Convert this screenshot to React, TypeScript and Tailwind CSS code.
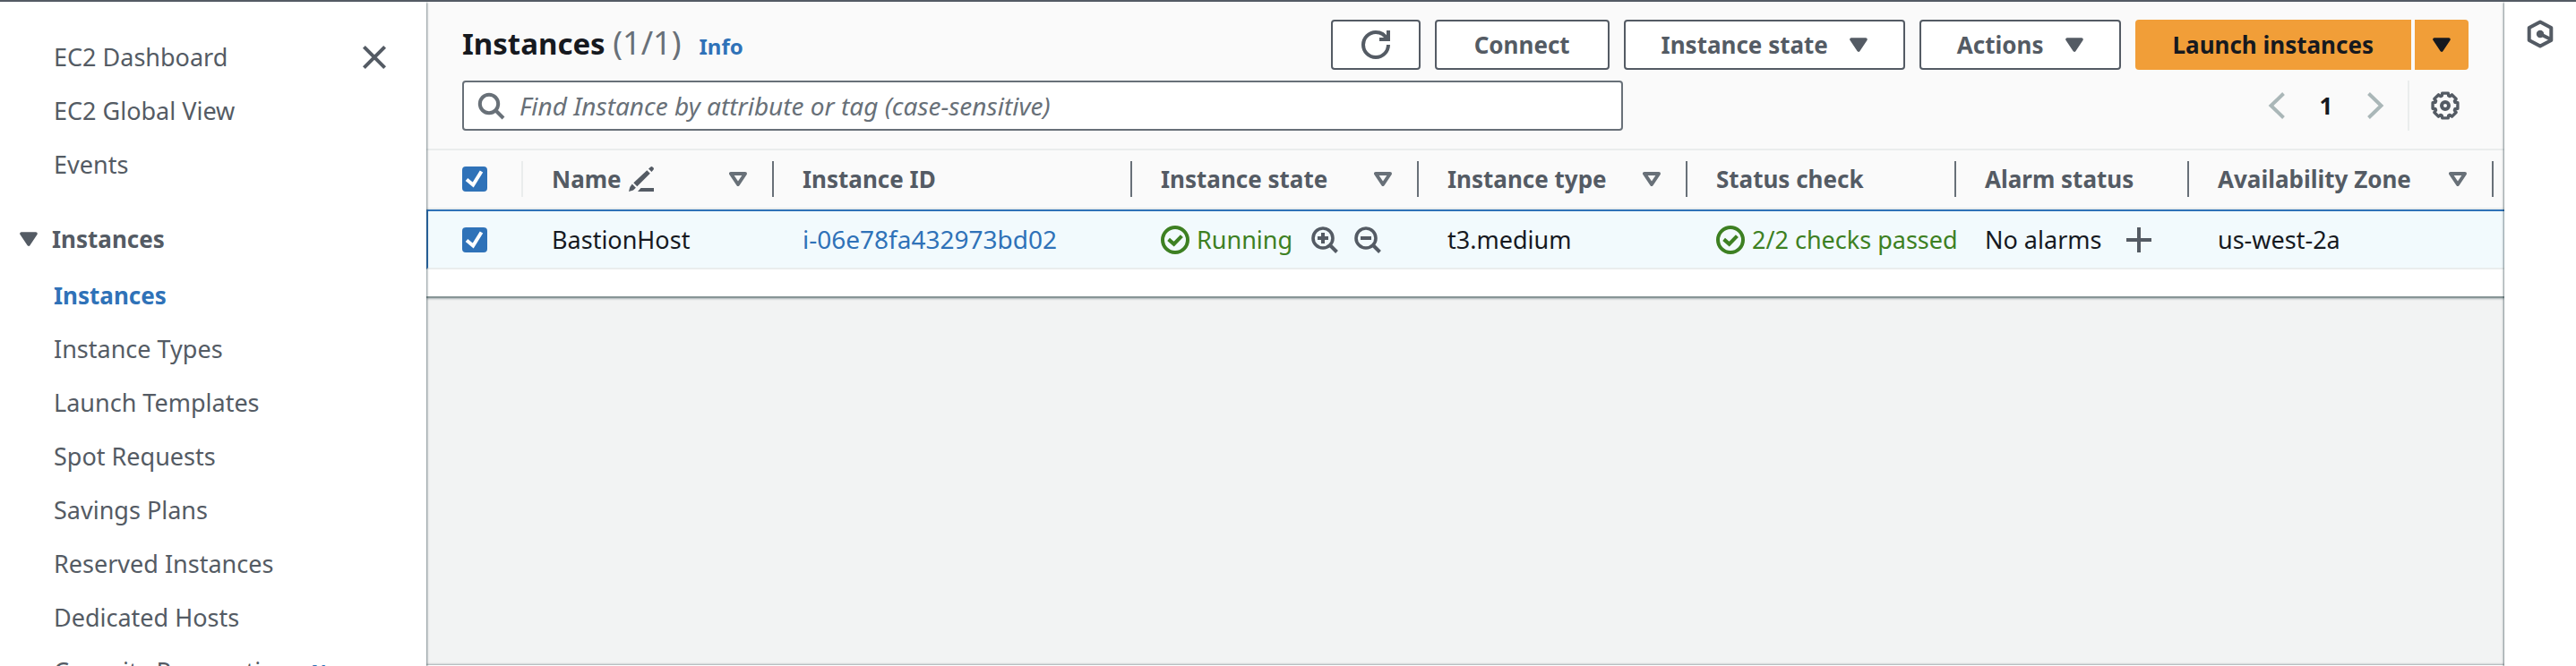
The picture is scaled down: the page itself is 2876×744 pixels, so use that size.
import type { ReactNode } from 'react';

const links = [
  'Instance Types',
  'Launch Templates',
  'Spot Requests',
  'Savings Plans',
  'Reserved Instances',
  'Dedicated Hosts',
];

function CloseIcon() {
  return (
    <svg className="size-8" viewBox="0 0 32 32" fill="none" stroke="currentColor" strokeWidth="4" aria-hidden="true">
      <path d="M4.4 4.4 27.6 27.6M27.6 4.4 4.4 27.6" />
    </svg>
  );
}

function CaretFilled() {
  return (
    <svg className="h-4 w-5 shrink-0" viewBox="0 0 20 16" aria-hidden="true">
      <path d="M2 2h16l-8 12z" fill="currentColor" stroke="currentColor" strokeWidth="3.6" strokeLinejoin="round" />
    </svg>
  );
}

function CaretHollow() {
  return (
    <svg className="h-4 w-5 shrink-0 text-[#687078]" viewBox="0 0 20 16" aria-hidden="true">
      <path d="M2 2h16l-8 12z" fill="none" stroke="currentColor" strokeWidth="4" strokeLinejoin="round" />
    </svg>
  );
}

function SearchIcon() {
  return (
    <svg className="size-8 shrink-0" viewBox="0 0 32 32" fill="none" stroke="currentColor" strokeWidth="4" aria-hidden="true">
      <circle cx="14" cy="14" r="10.2" />
      <path d="m21 21 9 9" />
    </svg>
  );
}

function ZoomIcon({ plus }: { plus?: boolean }) {
  return (
    <svg className="size-8" viewBox="0 0 32 32" fill="none" stroke="currentColor" strokeWidth="4" aria-hidden="true">
      <circle cx="14" cy="14" r="11" strokeWidth="3.6" />
      <path d="m21.5 21.5 8 8M8 14h12" />
      {plus && <path d="M14 8v12" />}
    </svg>
  );
}

function CheckCircle() {
  return (
    <svg className="size-8 shrink-0" viewBox="0 0 32 32" fill="none" stroke="currentColor" strokeWidth="4" aria-hidden="true">
      <circle cx="16" cy="16" r="14" />
      <path d="m8.6 15.4 6 5.2 8.8-9" strokeWidth="4.2" />
    </svg>
  );
}

function RefreshIcon() {
  return (
    <svg className="size-8" viewBox="0 0 16 16" fill="none" stroke="currentColor" strokeWidth="2" aria-hidden="true">
      <path d="M15 8c0 3.87-3.13 7-7 7s-7-3.13-7-7 3.13-7 7-7c2.8 0 5.2 1.6 6.3 4" />
      <path d="M10 5h5V0" />
    </svg>
  );
}

function EditIcon() {
  return (
    <svg className="size-7" viewBox="0 0 28 28" fill="currentColor" aria-hidden="true">
      <path d="M10 28h18v-4H13.5z" />
      <path d="M22 2.5 24.4.4q1.2-.8 2.4.4 1.8 1.2.8 2.8L25.5 6z" />
      <path d="m20.300 4.200 3.500 3.500L9.300 22.200l-4-4z" />
      <path d="M3.800 19.600 7.900 23.800 5 26.500 0 28l1.300-5z" />
    </svg>
  );
}

function PlusIcon() {
  return (
    <svg className="size-7" viewBox="0 0 28 28" stroke="currentColor" strokeWidth="4" aria-hidden="true">
      <path d="M14 0v28M0 14h28" />
    </svg>
  );
}

function Chevron({ next }: { next?: boolean }) {
  return (
    <svg className="size-8" viewBox="0 0 32 32" fill="none" stroke="currentColor" strokeWidth="4" aria-hidden="true">
      {next ? <path d="m8.500 2.500 14 13.500-14 13.500" /> : <path d="m23.500 2.500-14 13.500 14 13.500" />}
    </svg>
  );
}

const gearPoints = Array.from({ length: 8 }, (_, tooth) =>
  [[-0.23, 14.3], [0.23, 14.3], [0.33, 11.6], [0.46, 11.6]].map(([turn, radius]) => {
    const angle = (tooth * Math.PI) / 4 + turn;
    return `${(16 + radius * Math.sin(angle)).toFixed(2)},${(16 - radius * Math.cos(angle)).toFixed(2)}`;
  }).join(' '),
).join(' ');

function GearIcon() {
  return (
    <svg className="size-8" viewBox="0 0 32 32" fill="none" stroke="currentColor" strokeWidth="4" aria-hidden="true">
      <polygon points={gearPoints} strokeWidth="3.4" strokeLinejoin="round" />
      <circle cx="16" cy="16" r="4" />
    </svg>
  );
}

function HexIcon() {
  return (
    <svg className="size-8" viewBox="0 0 32 32" fill="none" stroke="currentColor" strokeWidth="4" strokeLinejoin="round" aria-hidden="true">
      <path d="M16 2.500 28.300 9v14L16 29.500 3.700 23V9z" />
      <path d="m16 16 11 5.500" />
      <circle cx="16" cy="16" r="4.200" fill="currentColor" stroke="none" />
    </svg>
  );
}

function Checkbox({ label }: { label: string }) {
  return (
    <label className="grid size-7 place-items-center">
      <input
        type="checkbox"
        defaultChecked
        aria-label={label}
        className="peer col-start-1 row-start-1 size-7 appearance-none rounded-sm border-2 border-[#687078] bg-white checked:border-[#2f72b8] checked:bg-[#2f72b8]"
      />
      <svg className="pointer-events-none col-start-1 row-start-1 hidden size-7 peer-checked:block" viewBox="0 0 28 28" fill="none" stroke="#fff" strokeWidth="4" aria-hidden="true">
        <path d="m5 14.500 7.200 6L21.500 5.500" />
      </svg>
    </label>
  );
}

function SideLink({ children, active }: { children: ReactNode; active?: boolean }) {
  return (
    <li className="flex h-[60px] items-center pl-[60px]">
      <a href="#" className={active ? 'text-[26px] font-bold text-[#2f72b8]' : ''}>
        {children}
      </a>
    </li>
  );
}

function Button({ children }: { children: ReactNode }) {
  return (
    <button type="button" className="flex h-14 items-center justify-center gap-6 rounded-sm border-2 border-[#545b64] bg-white px-10">
      {children}
    </button>
  );
}

function HeadCell({ children, sortable }: { children: ReactNode; sortable?: boolean }) {
  return (
    <th scope="col" className="border-b-2 border-[#eaeded] p-0 text-left font-bold">
      <div className="my-3 flex h-10 items-center justify-between border-r-2 border-[#687078] pr-7 pl-8">
        {children}
        {sortable && (
          <button type="button" aria-label="Sort">
            <CaretHollow />
          </button>
        )}
      </div>
    </th>
  );
}

function Cell({ children }: { children?: ReactNode }) {
  return <td className="border-t-2 border-b-2 border-t-[#2f72b8] border-b-[#eaeded] p-0 pl-8">{children}</td>;
}

export default function App() {
  return (
    <div className="flex h-screen flex-col overflow-hidden border-t-2 border-[#545b64] bg-white font-['Noto_Sans','Open_Sans',sans-serif] text-[27px] leading-10 whitespace-nowrap text-[#545b64]">
      <div className="flex min-h-0 flex-1">
        <nav aria-label="EC2" className="relative z-10 w-[476px] shrink-0 bg-white pt-8 shadow-[1px_1px_2px_rgba(0,28,36,0.5)]">
          <ul>
            <li className="flex h-[60px] items-center justify-between pr-[42px] pl-[60px]">
              <a href="#">EC2 Dashboard</a>
              <button type="button" aria-label="Close navigation">
                <CloseIcon />
              </button>
            </li>
            <SideLink>EC2 Global View</SideLink>
            <SideLink>Events</SideLink>
          </ul>
          <button type="button" aria-expanded="true" className="mt-5 flex h-[66px] items-center gap-4 pl-[22px] text-[26px] font-bold">
            <CaretFilled />
            Instances
          </button>
          <ul>
            <SideLink active>Instances</SideLink>
            {links.map((text) => (
              <SideLink key={text}>{text}</SideLink>
            ))}
            <li className="flex h-[60px] items-baseline gap-2 pt-[10px] pl-[60px]">
              <a href="#">Capacity Reservations</a>
              <span className="text-[23px] font-bold text-[#2f72b8] italic">New</span>
            </li>
          </ul>
        </nav>

        <main className="flex min-w-0 flex-1 flex-col bg-[#f2f3f3]">
          <section className="shrink-0 border-b-2 border-[#879596] bg-white pb-[30px] shadow-[0_1px_2px_rgba(0,28,36,0.3)]">
            <header className="flex flex-col gap-3 border-b-2 border-[#eaeded] bg-[#fafafa] px-10 py-5">
              <div className="flex h-14 items-center justify-between">
                <div className="flex items-baseline">
                  <h1 className="text-[33px] font-bold text-[#16191f]">
                    Instances <span className="text-4xl leading-10 font-normal text-[#687078]">(1/1)</span>
                  </h1>
                  <a href="#" className="ml-5 text-2xl leading-10 font-bold text-[#2f72b8]">
                    Info
                  </a>
                </div>
                <div className="flex gap-4 text-[26px] font-bold">
                  <button type="button" aria-label="Refresh" className="flex h-14 w-[100px] items-center justify-center rounded-sm border-2 border-[#545b64] bg-white">
                    <RefreshIcon />
                  </button>
                  <button type="button" className="h-14 rounded-sm border-2 border-[#545b64] bg-white px-[42px]">
                    Connect
                  </button>
                  <Button>
                    Instance state
                    <CaretFilled />
                  </Button>
                  <Button>
                    Actions
                    <CaretFilled />
                  </Button>
                  <div className="flex gap-1 text-[#16191f]">
                    <button type="button" className="h-14 rounded-l-sm bg-[#f19e38] px-[42px]">
                      Launch instances
                    </button>
                    <button type="button" aria-label="More launch options" className="flex h-14 w-[60px] items-center justify-center rounded-r-sm bg-[#f19e38]">
                      <CaretFilled />
                    </button>
                  </div>
                </div>
              </div>
              <div className="flex items-center justify-between">
                <label className="flex h-14 max-w-[1296px] flex-1 items-center gap-4 rounded-sm border-2 border-[#687078] bg-white px-[14px] text-[#687078]">
                  <SearchIcon />
                  <input
                    type="search"
                    aria-label="Find instances"
                    placeholder="Find Instance by attribute or tag (case-sensitive)"
                    className="min-w-0 flex-1 bg-transparent text-[28px] italic outline-none placeholder:text-[#687078]"
                  />
                </label>
                <div className="flex h-14 items-center">
                  <button type="button" aria-label="Previous page" className="text-[#aab7b8]">
                    <Chevron />
                  </button>
                  <button type="button" aria-label="Page 1" className="w-[78px] text-[26px] font-bold text-[#16191f]">
                    1
                  </button>
                  <button type="button" aria-label="Next page" className="text-[#aab7b8]">
                    <Chevron next />
                  </button>
                  <div className="ml-5 flex h-14 items-center border-l-2 border-[#eaeded] pr-[10px] pl-6">
                    <button type="button" aria-label="Preferences">
                      <GearIcon />
                    </button>
                  </div>
                </div>
              </div>
            </header>

            <table className="w-full table-fixed border-separate border-spacing-0">
              <colgroup>
                <col className="w-[108px]" />
                <col className="w-[280px]" />
                <col className="w-[400px]" />
                <col className="w-[320px]" />
                <col className="w-[300px]" />
                <col className="w-[300px]" />
                <col className="w-[260px]" />
                <col className="w-[340px]" />
                <col />
              </colgroup>
              <thead className="bg-[#fafafa] text-[26px]">
                <tr>
                  <th scope="col" className="border-b-2 border-[#eaeded] p-0">
                    <div className="my-3 flex h-10 items-center border-r-2 border-[#eaeded] pl-10">
                      <Checkbox label="Select all instances" />
                    </div>
                  </th>
                  <HeadCell sortable>
                    <span className="flex flex-1 items-center gap-2">
                      Name <EditIcon />
                    </span>
                  </HeadCell>
                  <HeadCell>Instance ID</HeadCell>
                  <HeadCell sortable>Instance state</HeadCell>
                  <HeadCell sortable>Instance type</HeadCell>
                  <HeadCell>Status check</HeadCell>
                  <HeadCell>Alarm status</HeadCell>
                  <HeadCell sortable>Availability Zone</HeadCell>
                  <td className="border-b-2 border-[#eaeded] p-0" />
                </tr>
              </thead>
              <tbody className="text-[#16191f]">
                <tr className="h-[67px] bg-[#f2fafd]">
                  <td className="border-2 border-r-0 border-[#2f72b8] border-b-[#eaeded] p-0 pl-[38px]">
                    <Checkbox label="Select BastionHost" />
                  </td>
                  <Cell>BastionHost</Cell>
                  <Cell>
                    <a href="#" className="text-[28px] text-[#2f72b8]">
                      i-06e78fa432973bd02
                    </a>
                  </Cell>
                  <Cell>
                    <div className="flex items-center">
                      <span className="flex items-center gap-2 text-[#3d8022]">
                        <CheckCircle />
                        Running
                      </span>
                      <span className="ml-5 flex gap-4 text-[#545b64]">
                        <button type="button" aria-label="Filter for this state">
                          <ZoomIcon plus />
                        </button>
                        <button type="button" aria-label="Filter out this state">
                          <ZoomIcon />
                        </button>
                      </span>
                    </div>
                  </Cell>
                  <Cell>t3.medium</Cell>
                  <Cell>
                    <div className="flex items-center gap-2 overflow-hidden text-[#3d8022]">
                      <CheckCircle />
                      2/2 checks passed
                    </div>
                  </Cell>
                  <Cell>
                    <div className="flex items-center gap-7">
                      No alarms
                      <button type="button" aria-label="Add alarm" className="text-[#545b64]">
                        <PlusIcon />
                      </button>
                    </div>
                  </Cell>
                  <Cell>us-west-2a</Cell>
                  <Cell />
                </tr>
              </tbody>
            </table>
          </section>
          <div className="flex-1" />
          <div className="h-px shrink-0 bg-white shadow-[0_-1px_2px_rgba(0,28,36,0.5)]" />
        </main>

        <aside aria-label="Tools" className="relative z-10 flex w-20 shrink-0 flex-col items-center bg-white pt-5 shadow-[-1px_1px_2px_rgba(0,28,36,0.5)]">
          <button type="button" aria-label="Open tools">
            <HexIcon />
          </button>
        </aside>
      </div>
    </div>
  );
}
